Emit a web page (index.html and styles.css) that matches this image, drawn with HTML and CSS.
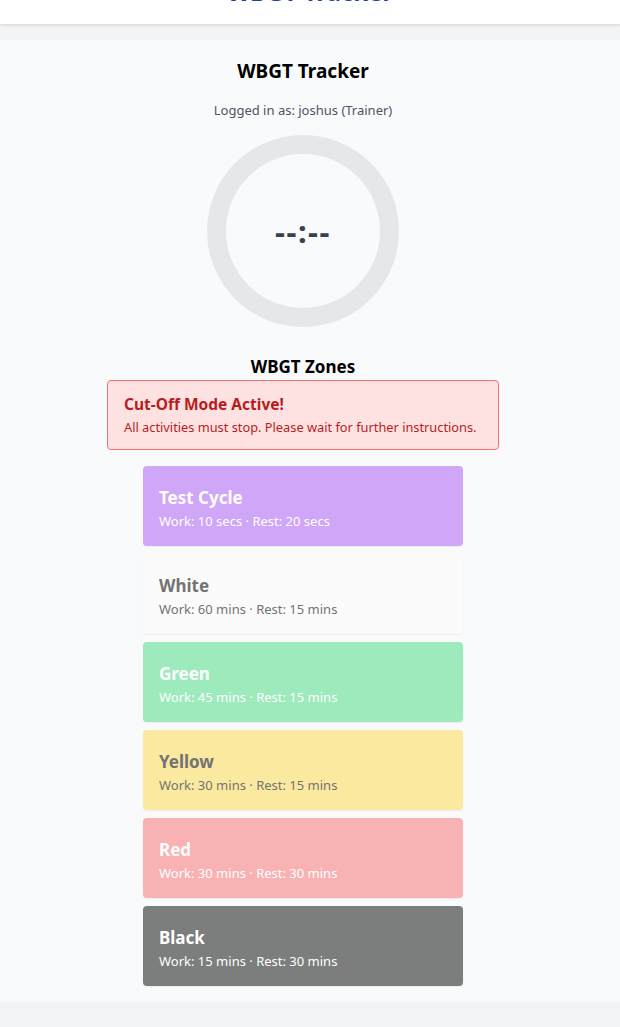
FILE: index.html
```html
<!DOCTYPE html>
<html lang="en">
<head>
<meta charset="utf-8">
<title>WBGT Tracker</title>
<link rel="stylesheet" href="styles.css">
</head>
<body>
<header class="topbar">
  <div class="brand">WBGT Tracker</div>
</header>
<main class="page">
  <div class="inner">
    <h1 class="title">WBGT Tracker</h1>
    <p class="user">Logged in as: joshus (Trainer)</p>
    <div class="timer">
      <span class="time">--:--</span>
    </div>
    <h2 class="zones-title">WBGT Zones</h2>
    <div class="alert">
      <div class="alert-title">Cut-Off Mode Active!</div>
      <div class="alert-body">All activities must stop. Please wait for further instructions.</div>
    </div>
    <div class="zones">
      <div class="zone zone-test"><div class="zone-name">Test Cycle</div><div class="zone-info">Work: 10 secs · Rest: 20 secs</div></div>
      <div class="zone zone-white"><div class="zone-name">White</div><div class="zone-info">Work: 60 mins · Rest: 15 mins</div></div>
      <div class="zone zone-green"><div class="zone-name">Green</div><div class="zone-info">Work: 45 mins · Rest: 15 mins</div></div>
      <div class="zone zone-yellow"><div class="zone-name">Yellow</div><div class="zone-info">Work: 30 mins · Rest: 15 mins</div></div>
      <div class="zone zone-red"><div class="zone-name">Red</div><div class="zone-info">Work: 30 mins · Rest: 30 mins</div></div>
      <div class="zone zone-black"><div class="zone-name">Black</div><div class="zone-info">Work: 15 mins · Rest: 30 mins</div></div>
    </div>
  </div>
</main>
</body>
</html>
```
FILE: styles.css
```css
html, body {
  margin: 0;
  padding: 0;
}
body {
  background: #f3f4f6;
  font-family: "Noto Sans", "Open Sans", sans-serif;
  color: #111;
  min-height: 1027px;
}
.topbar {
  background: #fff;
  height: 60px;
  margin-top: -36px;
  box-shadow: 0 1px 3px rgba(0,0,0,0.15);
  display: flex;
  justify-content: center;
  align-items: flex-end;
  position: relative;
  z-index: 1;
}
.brand {
  width: 606px;
  text-align: center;
  font-size: 24px;
  font-weight: 700;
  color: #1e40af;
  line-height: 32px;
  margin-bottom: 16px;
}
.page {
  margin-top: 16px;
  background: #f9fafb;
  padding: 18px 0 16px;
}
.inner {
  width: 606px;
  display: flex;
  flex-direction: column;
  align-items: center;
}
.title {
  margin: 0;
  font-size: 19px;
  line-height: 26px;
  font-weight: 700;
  color: #000;
}
.user {
  margin: 17px 0 0;
  font-size: 13px;
  line-height: 18px;
  color: #4b5563;
}
.timer {
  margin-top: 16px;
  width: 192px;
  height: 192px;
  box-sizing: border-box;
  border: 19px solid #e5e7eb;
  border-radius: 50%;
  display: flex;
  align-items: center;
  justify-content: center;
}
.time {
  font-size: 31px;
  font-weight: 700;
  color: #374151;
  letter-spacing: 1.5px;
  line-height: 36px;
}
.zones-title {
  margin: 29px 0 0;
  font-size: 17px;
  line-height: 22px;
  font-weight: 700;
  color: #000;
}
.alert {
  margin-top: 2px;
  width: 392px;
  box-sizing: border-box;
  background: #fee2e2;
  border: 1px solid #f87171;
  border-radius: 4px;
  padding: 13px 10px 13px 16px;
  color: #b91c1c;
}
.alert-title {
  font-size: 15.5px;
  line-height: 20px;
  font-weight: 700;
  margin-bottom: 4px;
}
.alert-body {
  font-size: 12.8px;
  line-height: 18px;
  white-space: nowrap;
}
.zones {
  margin-top: 16px;
  width: 320px;
  display: flex;
  flex-direction: column;
  gap: 8px;
}
.zone {
  height: 80px;
  box-sizing: border-box;
  border-radius: 4px;
  padding: 20px 16px 15px;
  box-shadow: 0 1px 2px rgba(0,0,0,0.06);
  color: #fff;
}
.zone-name {
  font-size: 17px;
  line-height: 24px;
  font-weight: 700;
}
.zone-info {
  margin-top: 2px;
  font-size: 13px;
  line-height: 18px;
}
.zone-test { background: #d0a6f8; }
.zone-white { background: #fbfbfb; color: #737373; }
.zone-green { background: #9deabd; }
.zone-yellow { background: #fbe9a0; color: #737373; }
.zone-red { background: #f8b2b3; }
.zone-black { background: #7c7d7d; }
```
